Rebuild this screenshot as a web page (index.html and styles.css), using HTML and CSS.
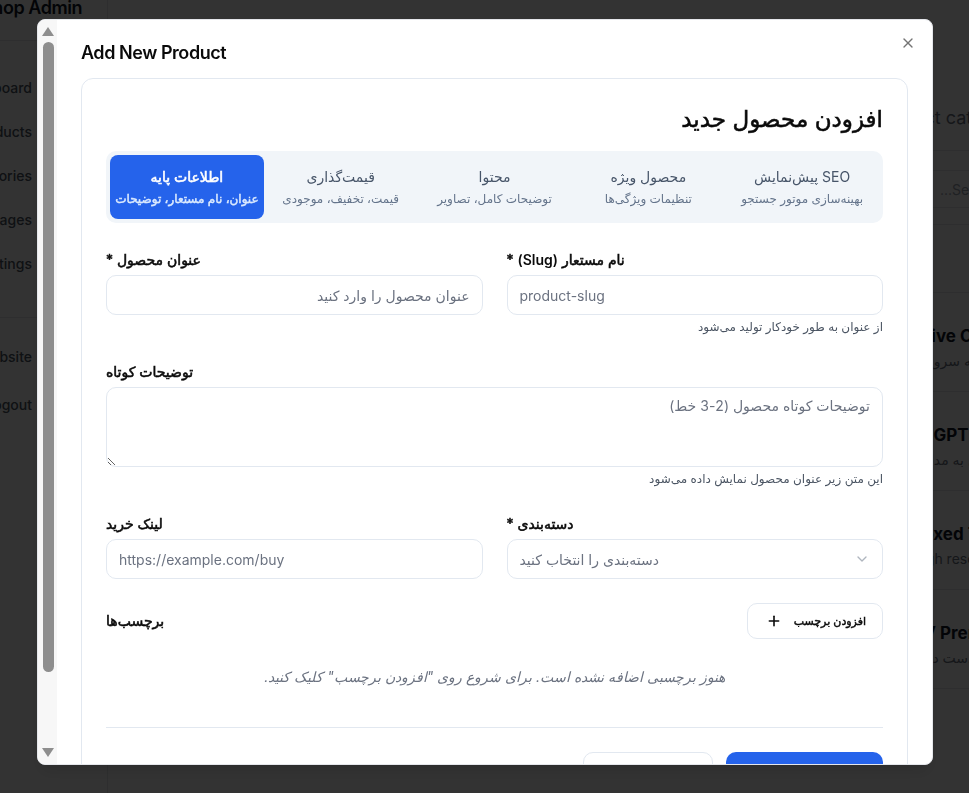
FILE: index.html
```html
<!DOCTYPE html>
<html lang="en">
<head>
<meta charset="utf-8">
<title>Shop Admin - Products</title>
<link rel="stylesheet" href="styles.css">
</head>
<body>
<div class="app">
  <aside class="sidebar">
    <div class="brand"><span>Shop Admin</span></div>
    <nav class="nav">
      <a class="nav-item"><span>Dashboard</span></a>
      <a class="nav-item"><span>Products</span></a>
      <a class="nav-item"><span>Categories</span></a>
      <a class="nav-item"><span>Pages</span></a>
      <a class="nav-item"><span>Settings</span></a>
    </nav>
    <nav class="nav nav-bottom">
      <a class="nav-item"><span>View Website</span></a>
      <a class="nav-item"><span>Logout</span></a>
    </nav>
  </aside>
  <main class="main">
    <section class="overview"></section>
    <section class="catalog">
      <p class="catalog-sub">Product catalog</p>
      <div class="panel">
        <div class="panel-search"><span class="search-input"><span dir="rtl">Search...</span></span></div>
        <div class="table-head"></div>
        <div class="row"><strong>Drive Cloud</strong><span dir="rtl">دسترسی کامل به سرویس</span></div>
        <div class="row"><strong>AI GPT Plus</strong><span dir="rtl">دسترسی کامل به مدل‌ها</span></div>
        <div class="row"><strong>Boxed Tools</strong><span>High resolution</span></div>
        <div class="row"><strong>TV Premium</strong><span dir="rtl">بدون از دست دادن</span></div>
      </div>
    </section>
  </main>
</div>

<div class="overlay"></div>

<div class="modal" role="dialog" aria-labelledby="dlg-title">
  <div class="scrollbar" aria-hidden="true">
    <span class="sb-arrow up"></span>
    <span class="sb-track"><span class="sb-thumb"></span></span>
    <span class="sb-arrow down"></span>
  </div>
  <div class="modal-body">
    <h2 class="modal-title" id="dlg-title">Add New Product</h2>
    <button class="close" aria-label="Close">
      <svg width="16" height="16" viewBox="0 0 24 24" fill="none" stroke="currentColor" stroke-width="2" stroke-linecap="round" stroke-linejoin="round"><path d="M18 6 6 18"/><path d="m6 6 12 12"/></svg>
    </button>

    <section class="card">
      <h3 class="card-title">افزودن محصول جدید</h3>

      <div class="tabs">
        <div class="tab active"><span class="tab-title">اطلاعات پایه</span><span class="tab-sub">عنوان، نام مستعار، توضیحات</span></div>
        <div class="tab"><span class="tab-title">قیمت‌گذاری</span><span class="tab-sub">قیمت، تخفیف، موجودی</span></div>
        <div class="tab"><span class="tab-title">محتوا</span><span class="tab-sub">توضیحات کامل، تصاویر</span></div>
        <div class="tab"><span class="tab-title">محصول ویژه</span><span class="tab-sub">تنظیمات ویژگی‌ها</span></div>
        <div class="tab"><span class="tab-title">SEO پیش‌نمایش</span><span class="tab-sub">بهینه‌سازی موتور جستجو</span></div>
      </div>

      <div class="form-grid">
        <div class="field">
          <label class="label">عنوان محصول *</label>
          <input class="input rtl" type="text" placeholder="عنوان محصول را وارد کنید">
        </div>
        <div class="field">
          <label class="label">نام مستعار <span class="latin">(Slug)</span> *</label>
          <input class="input" type="text" placeholder="product-slug">
          <p class="hint">از عنوان به طور خودکار تولید می‌شود</p>
        </div>
        <div class="field span-2">
          <label class="label">توضیحات کوتاه</label>
          <textarea class="textarea" dir="rtl" placeholder="توضیحات کوتاه محصول (2-3 خط)"></textarea>
          <p class="hint">این متن زیر عنوان محصول نمایش داده می‌شود</p>
        </div>
        <div class="field">
          <label class="label">لینک خرید</label>
          <input class="input" type="text" placeholder="https://example.com/buy">
        </div>
        <div class="field">
          <label class="label">دسته‌بندی *</label>
          <button class="select" type="button">
            <span>دسته‌بندی را انتخاب کنید</span>
            <svg width="16" height="16" viewBox="0 0 24 24" fill="none" stroke="currentColor" stroke-width="2" stroke-linecap="round" stroke-linejoin="round"><path d="m6 9 6 6 6-6"/></svg>
          </button>
        </div>
      </div>

      <div class="tags">
        <div class="tags-head">
          <span class="label">برچسب‌ها</span>
          <button class="btn-outline small" type="button">
            <svg width="16" height="16" viewBox="0 0 24 24" fill="none" stroke="currentColor" stroke-width="2.4" stroke-linecap="round" stroke-linejoin="round"><path d="M5 12h14"/><path d="M12 5v14"/></svg>
            <span>افزودن برچسب</span>
          </button>
        </div>
        <p class="tags-empty">هنوز برچسبی اضافه نشده است. برای شروع روی "افزودن برچسب" کلیک کنید.</p>
      </div>

      <div class="footer">
        <button class="btn-outline" type="button">انصراف</button>
        <button class="btn-primary" type="button">ذخیره محصول</button>
      </div>
    </section>
  </div>
</div>
</body>
</html>
```
FILE: styles.css
```css
* { box-sizing: border-box; margin: 0; padding: 0; }
html, body { height: 100%; }
body {
  font-family: Inter, "DejaVu Sans", sans-serif;
  background: #ffffff;
  color: #0f172a;
  overflow: hidden;
}

/* ---------- background page ---------- */
.app { display: flex; height: 100vh; }
.sidebar {
  width: 108px;
  flex: none;
  background: #ffffff;
  border-right: 1px solid #e5e7eb;
  display: flex;
  flex-direction: column;
  overflow: hidden;
}
.brand {
  height: 41px;
  flex: none;
  display: flex;
  justify-content: flex-end;
  padding-right: 25px;
  border-bottom: 1px solid #e5e7eb;
  font-size: 18px;
  line-height: 16px;
  font-weight: 600;
  letter-spacing: -0.025em;
  white-space: nowrap;
  color: #111827;
}
.nav { display: flex; flex-direction: column; padding-top: 24px; }
.nav-item {
  height: 44px;
  display: flex;
  align-items: center;
  justify-content: flex-end;
  padding-right: 75px;
  white-space: nowrap;
  font-size: 14px;
  font-weight: 500;
  color: #4b5563;
}
.nav-bottom { margin-top: 32px; border-top: 1px solid #e5e7eb; padding-top: 16px; gap: 4px; }

.main {
  flex: 1;
  min-width: 0;
  overflow: hidden;
  display: grid;
  grid-template-columns: 764px 420px;
  column-gap: 24px;
  padding: 106px 0 0 0;
  align-items: start;
}
.overview { height: 600px; }
.catalog { white-space: nowrap; }
.catalog-sub { font-size: 18px; line-height: 24px; color: #6b7280; margin-left: -22px; }
.panel {
  margin-top: 20px;
  border-top: 1px solid #e5e7eb;
  background: #fff;
}
.panel-search { padding: 19px 0 16px; border-bottom: 1px solid #e5e7eb; }
.search-input {
  display: flex;
  align-items: center;
  height: 38px;
  border-top: 1px solid #e5e7eb;
  border-bottom: 1px solid #e5e7eb;
  color: #9ca3af;
  font-size: 14px;
  padding-left: 44px;
}
.table-head { height: 68px; border-bottom: 1px solid #e5e7eb; }
.row {
  height: 99px;
  border-bottom: 1px solid #e5e7eb;
  display: flex;
  flex-direction: column;
  justify-content: center;
  align-items: flex-start;
  gap: 6px;
  padding: 10px 0 0 16px;
}
.row strong { font-size: 17px; font-weight: 700; color: #111827; }
.row span { font-size: 14px; color: #6b7280; }

.overlay { position: fixed; inset: 0; background: rgba(0, 0, 0, 0.8); }

/* ---------- modal ---------- */
.modal {
  position: fixed;
  left: 37px;
  top: 19px;
  width: 896px;
  height: 746px;
  background: #ffffff;
  border: 1px solid #e5e7eb;
  border-radius: 8px;
  overflow: hidden;
  display: flex;
  box-shadow: 0 10px 15px -3px rgba(0,0,0,.1), 0 4px 6px -4px rgba(0,0,0,.1);
}
.scrollbar {
  width: 19px;
  flex: none;
  background: #f7f7f7;
  display: flex;
  flex-direction: column;
  align-items: center;
  padding: 7px 0 7px 1px;
}
.sb-arrow { width: 0; height: 0; border-left: 6px solid transparent; border-right: 6px solid transparent; flex: none; }
.sb-arrow.up { border-bottom: 9px solid #8e8e8e; }
.sb-arrow.down { border-top: 9px solid #8e8e8e; }
.sb-track { flex: 1; width: 11px; padding: 6px 0 76px; display: flex; }
.sb-thumb { flex: 1; background: #8e8e8e; border-radius: 6px; }

.modal-body {
  flex: 1;
  min-width: 0;
  padding: 24px;
  position: relative;
}
.modal-title {
  font-size: 18px;
  line-height: 18px;
  font-weight: 600;
  letter-spacing: -0.025em;
  color: #0a0a0a;
}
.close {
  position: absolute;
  top: 15px;
  right: 16px;
  border: 0;
  background: none;
  color: #525252;
  display: flex;
  opacity: .8;
}

.card {
  margin-top: 16px;
  border: 1px solid #e2e8f0;
  border-radius: 12px;
  padding: 24px;
}
.card-title {
  direction: rtl;
  font-size: 23px;
  line-height: 32px;
  font-weight: 400;
  -webkit-text-stroke: 0.55px #0a0a0a;
  color: #0a0a0a;
  margin-bottom: 16px;
}

.tabs {
  display: grid;
  grid-template-columns: repeat(5, 1fr);
  background: #f1f5f9;
  border-radius: 10px;
  padding: 4px;
}
.tab {
  height: 64px;
  border-radius: 8px;
  display: flex;
  flex-direction: column;
  align-items: center;
  justify-content: center;
  gap: 4px;
  direction: rtl;
  white-space: nowrap;
}
.tab-title { font-size: 14px; line-height: 20px; color: #475569; }
.tab-sub { font-size: 12px; line-height: 16px; color: #64748b; }
.tab.active { background: #2563eb; }
.tab.active .tab-title { color: #ffffff; -webkit-text-stroke: 0.55px #ffffff; }
.tab.active .tab-sub { color: #dbeafe; -webkit-text-stroke: 0.45px #dbeafe; }

.form-grid {
  margin-top: 30px;
  display: grid;
  grid-template-columns: 1fr 1fr;
  column-gap: 24px;
  row-gap: 30px;
}
.span-2 { grid-column: 1 / -1; }
.field { display: flex; flex-direction: column; }
.label {
  display: block;
  direction: rtl;
  text-align: left;
  font-size: 14px;
  line-height: 14px;
  font-weight: 400;
  -webkit-text-stroke: 0.55px #0a0a0a;
  color: #0a0a0a;
  margin-bottom: 8px;
}
.label .latin { font-weight: 600; -webkit-text-stroke: 0; }
.input, .select, .textarea {
  font-family: inherit;
  width: 100%;
  border: 1px solid #e2e8f0;
  border-radius: 10px;
  background: #ffffff;
  font-size: 14px;
  color: #0f172a;
  outline: none;
}
.input { height: 40px; padding: 0 12px; }
.input.rtl { direction: rtl; }
.input::placeholder, .textarea::placeholder { color: #6b7280; }
.textarea { height: 80px; padding: 8px 12px; resize: vertical; line-height: 20px; }
.select {
  height: 40px;
  padding: 0 12px;
  display: flex;
  align-items: center;
  justify-content: space-between;
  color: #6b7280;
  text-align: left;
}
.select svg { color: #9ca3af; opacity: .8; }
.hint {
  direction: rtl;
  margin-top: 4px;
  font-size: 12px;
  line-height: 16px;
  color: #4b5563;
}

.tags { margin-top: 24px; }
.tags-head { display: flex; align-items: center; justify-content: space-between; }
.tags-head .label { margin-bottom: 0; }
.btn-outline, .btn-primary {
  font-family: inherit;
  height: 40px;
  border-radius: 10px;
  font-size: 14px;
  font-weight: 400;
  display: inline-flex;
  align-items: center;
  justify-content: center;
  cursor: pointer;
}
.btn-outline { border: 1px solid #e2e8f0; background: #ffffff; color: #0a0a0a; width: 130px; }
.btn-outline.small {
  width: 136px;
  height: 36px;
  padding: 0 16px 0 18px;
  justify-content: space-between;
  font-size: 11px;
  -webkit-text-stroke: 0.45px #0a0a0a;
}
.btn-primary { border: 0; background: #2563eb; color: #ffffff; width: 157px; }
.tags-empty {
  direction: rtl;
  margin-top: 16px;
  padding: 12px 0;
  text-align: center;
  font-size: 14px;
  line-height: 20px;
  font-style: italic;
  color: #6b7280;
}

.footer {
  margin-top: 28px;
  border-top: 1px solid #e2e8f0;
  padding-top: 24px;
  display: flex;
  justify-content: flex-end;
  gap: 13px;
}
```
